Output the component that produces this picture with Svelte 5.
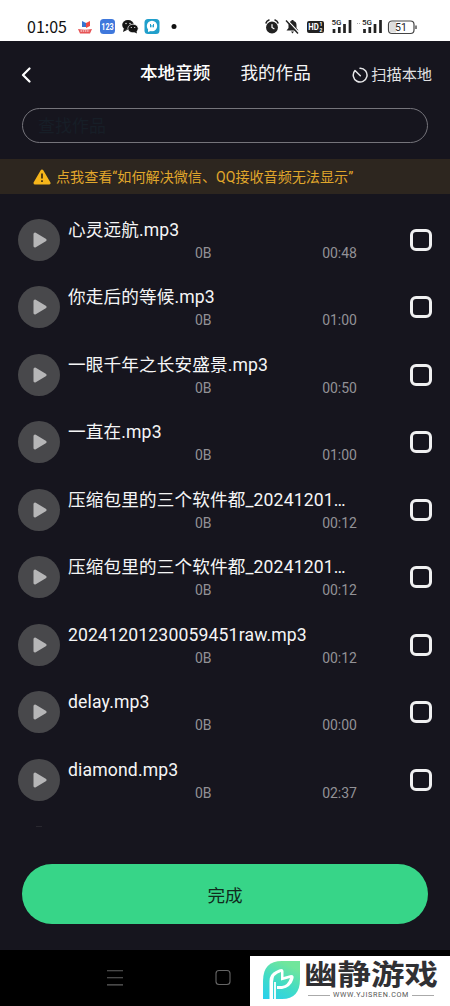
<script>
  let tracks = $state([
    { name: '心灵远航.mp3', size: '0B', time: '00:48', checked: false },
    { name: '你走后的等候.mp3', size: '0B', time: '01:00', checked: false },
    { name: '一眼千年之长安盛景.mp3', size: '0B', time: '00:50', checked: false },
    { name: '一直在.mp3', size: '0B', time: '01:00', checked: false },
    { name: '压缩包里的三个软件都_20241201…', size: '0B', time: '00:12', checked: false },
    { name: '压缩包里的三个软件都_20241201…', size: '0B', time: '00:12', checked: false },
    { name: '20241201230059451raw.mp3', size: '0B', time: '00:12', checked: false },
    { name: 'delay.mp3', size: '0B', time: '00:00', checked: false },
    { name: 'diamond.mp3', size: '0B', time: '02:37', checked: false }
  ]);

  let query = $state('');
</script>

<div class="screen">
  <div class="status-bar">
    <span class="clock">01:05</span>
    <svg class="app-icons" width="100" height="18" viewBox="0 0 100 18">
      <path d="M5 3l4 2v4H5z" fill="#3974cf" />
      <path d="M9 5l4-2v5l-4 2z" fill="#ef4b45" />
      <path d="M1 11q7 1.500 14 0l-2 4.500H3z" fill="#e65355" />
      <path d="M3.500 13h9" stroke="#fff" stroke-dasharray="1.500 .7" />
      <rect x="23" y="1" width="15" height="15" rx="3.500" fill="#3f78dc" />
      <text x="30.500" y="12.300" text-anchor="middle" font-size="9" font-weight="700" fill="#fff" textLength="12.500" lengthAdjust="spacingAndGlyphs">123</text>
      <ellipse cx="51" cy="7" rx="5.800" ry="5" fill="#151515" />
      <path d="M47 10l-1 4 4-2z" fill="#151515" />
      <ellipse cx="56" cy="10.500" rx="5.200" ry="4.300" fill="#151515" stroke="#fff" stroke-width=".7" />
      <path d="M57 14l3 1.500-.7-3z" fill="#151515" />
      <g fill="#fff">
        <circle cx="49" cy="5.500" r=".7" /><circle cx="53" cy="5.500" r=".7" />
        <circle cx="54.300" cy="9.500" r=".6" /><circle cx="57.700" cy="9.500" r=".6" />
      </g>
      <rect x="67.500" y="1" width="15" height="15" rx="3.500" fill="#209fcb" />
      <circle cx="75" cy="8" r="5.200" fill="#fff" />
      <path d="M71 11v3l4-1.500z" fill="#fff" />
      <path d="M73.500 6v3.300M75 7v2.300M76.500 6v3.300" stroke="#209fcb" stroke-width="1" />
      <circle cx="97" cy="8.500" r="2.500" fill="#111" />
    </svg>
    <svg class="system-icons" width="154" height="20" viewBox="0 0 154 20">
      <g fill="none" stroke="#222" stroke-width="1.500" stroke-linecap="round">
        <circle cx="7" cy="10.500" r="5.200" fill="#222" />
        <path d="M1 6q.5-2 3-3M10 3q2.500 1 3 3" />
        <path d="M7 7.500v3l2 1.200" stroke="#fff" stroke-width="1.200" />
      </g>
      <path d="M21.500 13.500l2-2.500V8q0-3.500 3-4V3h2v1q3 .5 3 4v3l2 2.500z" fill="#222" />
      <path d="M26 14.500h3l-1.500 2z" fill="#222" />
      <path d="M22.500 3.500l11.500 12" stroke="#fff" stroke-width="1.200" />
      <path d="M21 3.500l12 13" stroke="#222" stroke-width="1.400" />
      <rect x="42" y="4" width="17" height="12" rx="2" fill="#222" />
      <text x="43.300" y="13.300" font-size="8.800" font-weight="700" fill="#fff" textLength="10.500" lengthAdjust="spacingAndGlyphs">HD</text>
      <text x="54.500" y="9.300" font-size="5" font-weight="700" fill="#fff">1</text>
      <text x="54.500" y="14.600" font-size="5" font-weight="700" fill="#fff">2</text>
      <g font-size="8" font-weight="500" fill="#222">
        <text x="66.500" y="8">5G</text>
        <text x="97" y="8">5G</text>
      </g>
      <g stroke="#222" stroke-width="2.700">
        <path d="M69 12v4M74.300 10v6M79.500 7v9M85 3v13" />
        <path d="M99.500 12v4M104.800 10v6M110 7v9M115.500 3v13" />
      </g>
      <path d="M92 6.500h4" stroke="#aaa" stroke-width="1" stroke-dasharray="1 1" />
      <rect x="123.500" y="4" width="25.500" height="12.500" rx="3.500" fill="#fff" stroke="#444" stroke-width="1.200" />
      <path d="M127 5h4v10.500h-4q-2.500 0-2.500-2.500V7.500q0-2.500 2.500-2.500z" fill="#ddd" />
      <path d="M151 8.500v3.500" stroke="#555" stroke-width="1.500" />
      <text x="136" y="14" text-anchor="middle" font-size="10.500" fill="#222">51</text>
    </svg>
  </div>

  <header class="header">
    <button class="back" aria-label="返回">
      <svg width="12" height="16" viewBox="0 0 12 16">
        <path d="M8.500 1.500L2 8l6.500 6.500" fill="none" stroke="#fff" stroke-width="2.200" stroke-linecap="round" stroke-linejoin="round" />
      </svg>
    </button>
    <nav class="tabs">
      <button class="tab active">本地音频</button>
      <button class="tab">我的作品</button>
    </nav>
    <button class="scan">
      <svg width="16" height="16" viewBox="0 0 16 16">
        <path d="M8 1.200A6.900 6.900 0 1 1 3 3.500L8.300 8.800" fill="none" stroke="#e6e6e8" stroke-width="1.500" stroke-linecap="round" stroke-linejoin="round" />
      </svg>
      <span>扫描本地</span>
    </button>
  </header>

  <input class="search" type="text" placeholder="查找作品" bind:value={query} />

  <div class="notice">
    <svg width="18" height="16" viewBox="0 0 18 16">
      <path d="M9 2L16 14H2z" fill="#f5b51b" stroke="#f5b51b" stroke-width="3" stroke-linejoin="round" />
      <path d="M9 4.500v5M9 11.300v1.700" stroke="#3a2b12" stroke-width="1.700" />
    </svg>
    <span>点我查看“如何解决微信、QQ接收音频无法显示”</span>
  </div>

  <ul class="tracks">
    {#each tracks as track}
      <li class="track">
        <button class="play" aria-label="播放">
          <svg width="14" height="16" viewBox="0 0 14 16">
            <path d="M2 2L12 8 2 14z" fill="#b6b6b7" stroke="#b6b6b7" stroke-width="3" stroke-linejoin="round" />
          </svg>
        </button>
        <div class="info">
          <div class="name">{track.name}</div>
          <div class="meta">
            <span>{track.size}</span>
            <span>{track.time}</span>
          </div>
        </div>
        <input class="check" type="checkbox" aria-label={track.name} bind:checked={track.checked} />
      </li>
    {/each}
    <li class="next"></li>
  </ul>

  <button class="done">完成</button>

  <footer class="nav-bar">
    <div class="nav-keys">
      <svg width="16" height="18" viewBox="0 0 16 18">
        <path d="M0 1.700h16M0 8.800h16M0 15.900h16" stroke="#606060" stroke-width="1.100" />
      </svg>
      <svg width="16" height="18" viewBox="0 0 16 18">
        <rect x="1" y="1.500" width="14" height="14" rx="3" fill="none" stroke="#666" stroke-width="1.100" />
      </svg>
    </div>
    <div class="brand">
      <svg width="38" height="40" viewBox="0 0 38 40">
        <defs>
          <linearGradient id="leaf" x1="0" y1="1" x2=".5" y2="0">
            <stop offset="0" stop-color="#28cfee" />
            <stop offset=".5" stop-color="#40dbc8" />
            <stop offset="1" stop-color="#70e69c" />
          </linearGradient>
        </defs>
        <path d="M1 38V20Q1 0 20 0h18v18q0 20-18 20z" fill="url(#leaf)" />
        <path d="M7.500 38V20q0-7 6.500-10 7-4 7.500 0v6l7.500-2q4 0 2 5-2 7-11 9h-5v-3h5q6-1 8-8l-9 2.500V11q-8 2-8 10v17z" fill="#fff" />
        <path d="M13 38V21" stroke="#fff" stroke-width="1.800" />
      </svg>
      <div class="brand-text">
        <div class="brand-name">幽静游戏</div>
        <div class="brand-url"><span>WWW.YJISREN.COM</span></div>
      </div>
    </div>
  </footer>
</div>

<style>
  :global(body) {
    background: #16151e;
  }

  .screen {
    display: flex;
    flex-direction: column;
    height: 1006px;
    overflow: hidden;
    background: #16151e;
    color: #f5f5f6;
    font-family: Roboto, 'Noto Sans CJK SC', sans-serif;
  }

  button {
    padding: 0;
    border: none;
    background: none;
    color: inherit;
    font: inherit;
    cursor: pointer;
  }

  svg {
    display: block;
    flex-shrink: 0;
  }

  .status-bar {
    display: flex;
    align-items: center;
    flex: none;
    box-sizing: border-box;
    height: 41px;
    padding: 13px 32px 0 27px;
    background: #fff;
    color: #111;
  }

  .clock {
    width: 50px;
    margin-top: -3px;
    font-family: 'Noto Sans CJK SC', sans-serif;
    font-size: 16px;
    line-height: 20px;
    white-space: nowrap;
  }

  .system-icons {
    margin-left: auto;
    margin-right: -1px;
  }

  .header {
    display: grid;
    grid-template-columns: 119px 1fr auto;
    align-items: center;
    flex: none;
    height: 67px;
    padding: 0 18px 0 21px;
  }

  .back {
    justify-self: start;
  }

  .tabs {
    display: flex;
    gap: 30px;
    padding-bottom: 3px;
  }

  .tab {
    font-size: 17.6px;
    line-height: 26px;
  }

  .active {
    font-weight: 500;
    color: #fff;
  }

  .scan {
    display: flex;
    align-items: center;
    gap: 3px;
    color: #e0e0e2;
    font-size: 15.2px;
    line-height: 22px;
  }

  .search {
    flex: none;
    box-sizing: border-box;
    height: 35px;
    margin: 0 22px;
    padding: 0 15px;
    border: 1px solid #75747b;
    border-radius: 18px;
    background: transparent;
    color: #fff;
    font: 17px Roboto, 'Noto Sans CJK SC', sans-serif;
    outline: none;
  }

  .search::placeholder {
    color: #171e27;
    opacity: 1;
  }

  .notice {
    display: flex;
    align-items: center;
    gap: 5px;
    flex: none;
    height: 35px;
    margin-top: 16px;
    padding-left: 33px;
    background: #2d261f;
    color: #e0a62b;
    font-size: 14.1px;
    line-height: 20px;
    white-space: nowrap;
  }

  .tracks {
    flex: 1;
    min-height: 0;
    margin: 12px 0 0;
    padding: 0;
    overflow: hidden;
    list-style: none;
  }

  .track {
    display: flex;
    align-items: center;
    box-sizing: border-box;
    height: 67.5px;
    padding: 0 18px;
  }

  .play {
    display: flex;
    align-items: center;
    justify-content: center;
    flex: none;
    width: 42px;
    height: 42px;
    padding-left: 2px;
    border-radius: 50%;
    background: #48484b;
  }

  .info {
    width: 289px;
    margin-left: 8px;
  }

  .name {
    font-size: 17.6px;
    line-height: 26px;
    letter-spacing: 0.15px;
    white-space: nowrap;
  }

  .meta {
    display: flex;
    justify-content: space-between;
    padding-left: 127px;
    color: #929196;
    font-size: 14px;
    line-height: 20px;
  }

  .check {
    appearance: none;
    flex: none;
    box-sizing: border-box;
    width: 22px;
    height: 22px;
    margin: 0 0 0 auto;
    border: 3px solid #f0f0f1;
    border-radius: 6px;
  }

  .check:checked {
    background: #37d588;
  }

  .next {
    width: 6px;
    height: 1px;
    margin: 12px 0 0 36px;
    background: #29282f;
  }

  .done {
    flex: none;
    height: 60px;
    margin: 0 22px 26px;
    border-radius: 30px;
    background: #37d588;
    color: #102b1d;
    font-size: 17.6px;
  }

  .nav-bar {
    display: flex;
    justify-content: space-between;
    align-items: flex-end;
    flex: none;
    height: 56px;
    background: #000;
  }

  .nav-keys {
    display: flex;
    gap: 92px;
    padding: 0 0 19px 107px;
  }

  .brand {
    display: flex;
    gap: 4px;
    box-sizing: border-box;
    width: 200px;
    height: 50px;
    padding: 5px 0 0 12px;
    background: #fff;
    color: #303033;
  }

  .brand-text {
    width: 134px;
  }

  .brand-name {
    height: 29px;
    font-size: 33.5px;
    font-weight: 700;
    line-height: 29px;
    white-space: nowrap;
    transform: scaleY(0.84);
  }

  .brand-url {
    display: flex;
    align-items: center;
    gap: 3px;
    margin: 0 4px;
    color: #555;
    font-size: 7.2px;
    line-height: 10px;
    letter-spacing: 0.65px;
  }

  .brand-url::before,
  .brand-url::after {
    content: '';
    flex: 1;
    height: 1px;
    background: #aaa;
  }
</style>
